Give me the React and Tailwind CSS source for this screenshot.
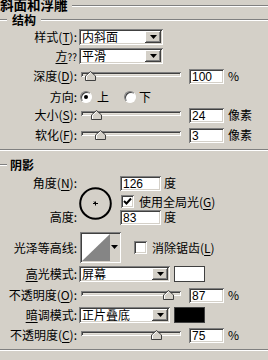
import React from "react";

const sunken =
  "shadow-[inset_1px_1px_0_#808080,inset_-1px_-1px_0_#ffffff,inset_2px_2px_0_#404040,inset_-2px_-2px_0_#d4d0c8]";
const raised =
  "shadow-[inset_-1px_-1px_0_#404040,inset_1px_1px_0_#ffffff,inset_-2px_-2px_0_#808080]";

function Etched({ className }) {
  return (
    <div className={"flex flex-col " + className}>
      <div className="h-[1px] bg-[#808080]" />
      <div className="h-[1px] bg-white" />
    </div>
  );
}

function U({ children }) {
  return <span className="underline underline-offset-[2px] decoration-1">{children}</span>;
}

function Label({ children }) {
  return (
    <div className="w-[77px] shrink-0 text-right text-[12px] leading-none text-black whitespace-nowrap">
      {children}
    </div>
  );
}

function Arrow() {
  return (
    <svg width="7" height="4" viewBox="0 0 7 4">
      <path d="M0 0H7L3.5 4Z" fill="#000" />
    </svg>
  );
}

function Select({ w, text }) {
  return (
    <div className={"ml-[2px] h-[16px] bg-white flex items-center " + sunken + " " + w}>
      <span className="flex-1 pl-[3px] text-[12px] leading-none whitespace-nowrap">{text}</span>
      <div className={"mr-[2px] w-[16px] h-[12px] bg-[#d4d0c8] flex items-center justify-center " + raised}>
        <Arrow />
      </div>
    </div>
  );
}

function Input({ value, w = "w-[35px]" }) {
  return (
    <div
      className={
        "h-[15px] bg-white flex items-center pl-[3px] pt-[1px] text-[12px] leading-none font-['Liberation_Sans',Arial,sans-serif] " +
        sunken +
        " " +
        w
      }
    >
      {value}
    </div>
  );
}

function Slider({ pos }) {
  return (
    <div className="relative w-[100px] h-[10px] ml-[4px]">
      <div className={"absolute left-0 right-0 top-[1px] h-[5px] bg-[#e4e1da] " + sunken} />
      <svg
        className="absolute top-0"
        style={{ left: pos - 5 }}
        width="11"
        height="10"
        viewBox="0 0 11 10"
      >
        <path d="M5.5 0.5L10.5 5V9.5H0.5V5Z" fill="#d4d0c8" stroke="#404040" />
        <path d="M1.5 9V5.4L5.5 1.6" fill="none" stroke="#ffffff" />
      </svg>
    </div>
  );
}

function SliderRow({ label, pos, value, unit, mt }) {
  return (
    <div className={"flex items-center h-[16px] " + mt}>
      <Label>{label}</Label>
      <Slider pos={pos} />
      <div className="ml-[8px]">
        <Input value={value} />
      </div>
      <span className="ml-[4px] text-[12px] leading-none">{unit}</span>
    </div>
  );
}

function Radio({ checked }) {
  return (
    <div className="w-[12px] h-[12px] rounded-full bg-white border border-t-[#808080] border-l-[#808080] border-r-[#ffffff] border-b-[#ffffff] flex items-center justify-center shadow-[inset_1px_1px_0_#404040]">
      {checked && <div className="w-[4px] h-[4px] rounded-full bg-black" />}
    </div>
  );
}

function Checkbox({ checked }) {
  return (
    <div className={"w-[13px] h-[13px] bg-white flex items-center justify-center " + sunken}>
      {checked && (
        <svg width="9" height="9" viewBox="0 0 9 9">
          <path d="M1 4L3.5 6.5L8 1.5" fill="none" stroke="#000" strokeWidth="2" />
        </svg>
      )}
    </div>
  );
}

export default function App() {
  return (
    <div className="w-[268px] h-[360px] bg-[#d4d0c8] overflow-hidden text-black font-['Noto_Sans_CJK_SC','Noto_Sans',sans-serif]">
      {/* header */}
      <div className="flex items-center h-[11px]">
        <span className="text-[13.5px] font-bold leading-none -mt-[1px] whitespace-nowrap">斜面和浮雕</span>
        <Etched className="flex-1 ml-[4px]" />
      </div>
      <div className="flex items-center h-[13px] mt-[2px]">
        <Etched className="w-[7px]" />
        <span className="ml-[5px] text-[12px] font-bold leading-none">结构</span>
        <Etched className="flex-1 ml-[5px]" />
      </div>

      <div className="flex items-center h-[16px] mt-[3px]">
        <Label>
          样式(<U>T</U>):
        </Label>
        <Select w="w-[84px]" text="内斜面" />
      </div>
      <div className="flex items-center h-[16px] mt-[3px]">
        <Label>
          <U>方</U>
          <span className="text-[10px]">??</span>
        </Label>
        <Select w="w-[84px]" text="平滑" />
      </div>

      <SliderRow
        mt="mt-[4px]"
        label={
          <>
            深度(<U>D</U>):
          </>
        }
        pos={9}
        value="100"
        unit="%"
      />

      <div className="flex items-center h-[15px] mt-[5px]">
        <Label>方向:</Label>
        <div className="ml-[3px]">
          <Radio checked />
        </div>
        <span className="ml-[5px] text-[12px] leading-none">上</span>
        <div className="ml-[15px]">
          <Radio />
        </div>
        <span className="ml-[3px] text-[12px] leading-none">下</span>
      </div>

      <SliderRow
        mt="mt-[3px]"
        label={
          <>
            大小(<U>S</U>):
          </>
        }
        pos={15}
        value="24"
        unit="像素"
      />
      <SliderRow
        mt="mt-[4px]"
        label={
          <>
            软化(<U>F</U>):
          </>
        }
        pos={19}
        value="3"
        unit="像素"
      />

      <Etched className="mt-[6px]" />

      <div className="flex items-center h-[14px] mt-[7px]">
        <Etched className="w-[7px]" />
        <span className="ml-[3px] text-[12px] font-bold leading-none">阴影</span>
      </div>

      {/* angle block */}
      <div className="flex h-[48px] mt-[4px]">
        <div className="flex flex-col justify-between">
          <div className="h-[14px] flex items-center">
            <Label>
              角度(<U>N</U>):
            </Label>
          </div>
          <div className="h-[14px] flex items-center">
            <Label>高度:</Label>
          </div>
        </div>
        <svg className="ml-[2px] mt-[11px]" width="33" height="33" viewBox="0 0 33 33">
          <circle cx="16.5" cy="16.5" r="15.3" fill="none" stroke="#000" strokeWidth="2" />
          <path d="M14 16.5H19M16.5 14.5V18.5" stroke="#000" strokeWidth="1" />
          <path d="M16.5 16.5L15 14.5" stroke="#000" strokeWidth="1" />
        </svg>
        <div className="ml-[8px] flex flex-col">
          <div className="h-[14px] flex items-center">
            <Input value="126" w="w-[41px]" />
            <span className="ml-[3px] text-[12px] leading-none">度</span>
          </div>
          <div className="h-[13px] mt-[5px] flex items-center">
            <div className="ml-[1px]">
              <Checkbox checked />
            </div>
            <span className="ml-[5px] text-[12px] leading-none whitespace-nowrap">
              使用全局光(<U>G</U>)
            </span>
          </div>
          <div className="h-[14px] mt-[2px] flex items-center">
            <Input value="83" w="w-[41px]" />
            <span className="ml-[3px] text-[12px] leading-none">度</span>
          </div>
        </div>
      </div>

      {/* contour */}
      <div className="flex items-center h-[31px] mt-[8px]">
        <Label>光泽等高线:</Label>
        <div className={"ml-[3px] w-[41px] h-[31px] flex p-[2px] bg-[#d4d0c8] " + sunken}>
          <svg width="28" height="27" viewBox="0 0 28 27">
            <rect width="28" height="27" fill="#fff" />
            <path d="M0 27L28 0V27Z" fill="#858585" />
          </svg>
          <div className="flex-1 flex items-center justify-center pb-[2px]">
            <Arrow />
          </div>
        </div>
        <div className="ml-[13px]">
          <Checkbox />
        </div>
        <span className="ml-[5px] text-[12px] leading-none whitespace-nowrap">
          消除锯齿(<U>L</U>)
        </span>
      </div>

      <div className="flex items-center h-[16px] mt-[3px]">
        <Label>
          <U>高</U>光模式:
        </Label>
        <Select w="w-[91px]" text="屏幕" />
        <div className="ml-[4px] w-[31px] h-[16px] bg-white border border-[#404040]" />
      </div>

      <SliderRow
        mt="mt-[5px]"
        label={
          <>
            不透明度(<U>O</U>):
          </>
        }
        pos={87}
        value="87"
        unit="%"
      />

      <div className="flex items-center h-[16px] mt-[4px]">
        <Label>
          <U>暗</U>调模式:
        </Label>
        <Select w="w-[91px]" text="正片叠底" />
        <div className="ml-[4px] w-[31px] h-[16px] bg-black border border-[#404040]" />
      </div>

      <SliderRow
        mt="mt-[4px]"
        label={
          <>
            不透明度(<U>C</U>):
          </>
        }
        pos={75}
        value="75"
        unit="%"
      />

      <Etched className="mt-[6px]" />
    </div>
  );
}
